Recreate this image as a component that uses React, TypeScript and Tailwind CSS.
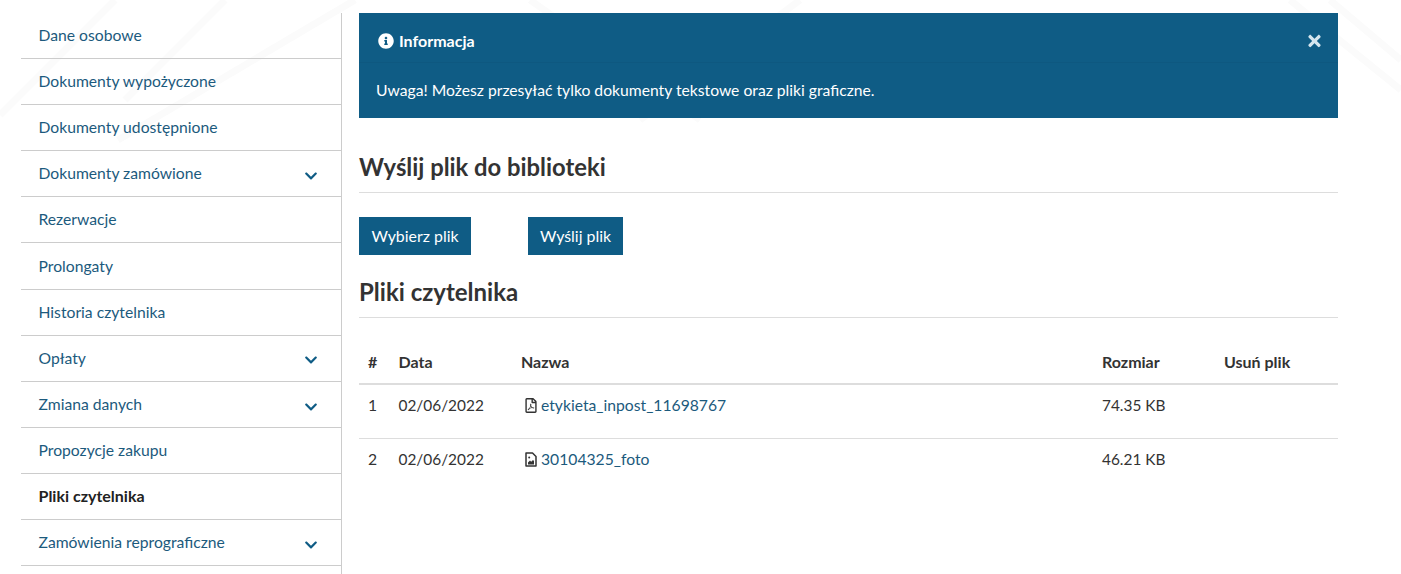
import { FaChevronDown, FaInfoCircle, FaRegFilePdf, FaTimes } from 'react-icons/fa';

const menu = [
  { label: 'Dane osobowe' },
  { label: 'Dokumenty wypożyczone' },
  { label: 'Dokumenty udostępnione' },
  { label: 'Dokumenty zamówione', arrow: 'mt-[4px]' },
  { label: 'Rezerwacje' },
  { label: 'Prolongaty', nudge: true },
  { label: 'Historia czytelnika', nudge: true },
  { label: 'Opłaty', arrow: 'mt-[2px]', nudge: true },
  { label: 'Zmiana danych', arrow: 'mt-[6px]' },
  { label: 'Propozycje zakupu' },
  { label: 'Pliki czytelnika', active: true },
  { label: 'Zamówienia reprograficzne', arrow: 'mt-[4px]' },
];

function ImageFileIcon() {
  return (
    <svg className="h-[15px] w-[12px] shrink-0" viewBox="0 0 12 15">
      <path d="M1 1h6.5L11 4.5V14H1z" fill="#fff" stroke="#333" strokeWidth="1.5" strokeLinejoin="round" />
      <path d="M3 12.4V10.6L5 8.6l1.2 1.2L8 8l1 1v3.4z" fill="#333" />
      <circle cx="4.2" cy="5.4" r="1" fill="#333" />
    </svg>
  );
}

export default function App() {
  return (
    <div className="relative h-[574px] overflow-hidden bg-white font-['Lato','Noto_Sans',sans-serif] text-[15.7px] text-[#333]">
      {/* faint background watermark */}
      <svg className="absolute inset-0 pointer-events-none" width="1401" height="574" fill="none" stroke="#fbfbfb" strokeWidth="7">
        <path d="M0 115 115 0M125 100 225 0M355 0 118 140M530 0 700 120M800 0 640 120M1290 0 1401 90M1330 0 1401 60" />
      </svg>

      <div className="relative flex pt-[13px] pl-[21px]">
        {/* Menu */}
        <nav className="w-[321px] h-[561px] shrink-0 border-r border-[#ccc]">
          {menu.map((item) => (
            <div
              key={item.label}
              className={`flex h-[46.1px] items-center justify-between border-b border-[#ccc] pl-[17.5px] pr-[22px] ${
                item.active ? 'text-[16px] font-bold text-[#222]' : 'text-[15.7px] text-[#1c5a7d]'
              } ${item.nudge ? 'pt-[2px]' : ''}`}
            >
              <span>{item.label}</span>
              {item.arrow && <FaChevronDown className={`h-[14px] w-[16px] text-[#0f5c85] ${item.arrow}`} />}
            </div>
          ))}
        </nav>

        {/* Content */}
        <main className="ml-[17px] w-[979px]">
          <div className="h-[105px] bg-[#0f5c85] text-white">
            <div className="flex h-[50px] items-center justify-between border-b border-[#0e5880] pt-[6px] pl-[19px] pr-[15px]">
              <div className="flex items-center gap-[5px] text-[16px] font-bold">
                <FaInfoCircle className="h-[16px] w-[16px]" />
                <span>Informacja</span>
              </div>
              <FaTimes className="h-[18px] w-[17px] text-[#d5e6ef]" />
            </div>
            <p className="pl-[17px] pt-[17px] leading-[20px]">
              Uwaga! Możesz przesyłać tylko dokumenty tekstowe oraz pliki graficzne.
            </p>
          </div>

          <h2 className="mt-[34px] border-b border-[#ddd] pb-[10px] text-[23.8px] leading-[30px] font-bold text-[#333]">
            Wyślij plik do biblioteki
          </h2>

          <div className="mt-[24px] flex gap-[57px] text-[15.9px]">
            <button className="h-[38px] w-[112px] bg-[#0f5c85] text-white">Wybierz plik</button>
            <button className="h-[38px] w-[95px] bg-[#0f5c85] text-white">Wyślij plik</button>
          </div>

          <h2 className="mt-[22px] border-b border-[#ddd] pb-[10px] text-[24px] leading-[30px] font-bold text-[#333]">
            Pliki czytelnika
          </h2>

          <table className="mt-[27px] w-full table-fixed border-collapse">
            <thead>
              <tr className="h-[39px] border-b-2 border-[#ddd] text-left text-[16px] font-bold">
                <th className="w-[31px] pb-[4px] pl-[9px] font-bold">#</th>
                <th className="w-[122px] pb-[4px] pl-[8.5px] font-bold">Data</th>
                <th className="w-[581px] pb-[4px] pl-[9px] font-bold">Nazwa</th>
                <th className="w-[122px] pb-[4px] pl-[9px] font-bold">Rozmiar</th>
                <th className="pb-[4px] pl-[9px] font-bold">Usuń plik</th>
              </tr>
            </thead>
            <tbody>
              <tr className="h-[54px] border-b border-[#ddd] align-top">
                <td className="pl-[9px] pt-[9px]">1</td>
                <td className="pl-[8.5px] pt-[9px] text-[15.4px]">02/06/2022</td>
                <td className="pl-[9px] pt-[9px]">
                  <span className="inline-flex items-center gap-[4px] pl-[4px] text-[#1c5a7d]">
                    <FaRegFilePdf className="h-[15px] w-[12px] text-[#333]" />
                    etykieta_inpost_11698767
                  </span>
                </td>
                <td className="pl-[9px] pt-[9px] text-[15.4px]">74.35 KB</td>
                <td />
              </tr>
              <tr className="h-[54px] align-top">
                <td className="pl-[9px] pt-[9px]">2</td>
                <td className="pl-[8.5px] pt-[9px] text-[15.4px]">02/06/2022</td>
                <td className="pl-[9px] pt-[9px]">
                  <span className="inline-flex items-center gap-[4px] pl-[4px] text-[#1c5a7d]">
                    <ImageFileIcon />
                    30104325_foto
                  </span>
                </td>
                <td className="pl-[9px] pt-[9px] text-[15.4px]">46.21 KB</td>
                <td />
              </tr>
            </tbody>
          </table>
        </main>
      </div>
    </div>
  );
}
